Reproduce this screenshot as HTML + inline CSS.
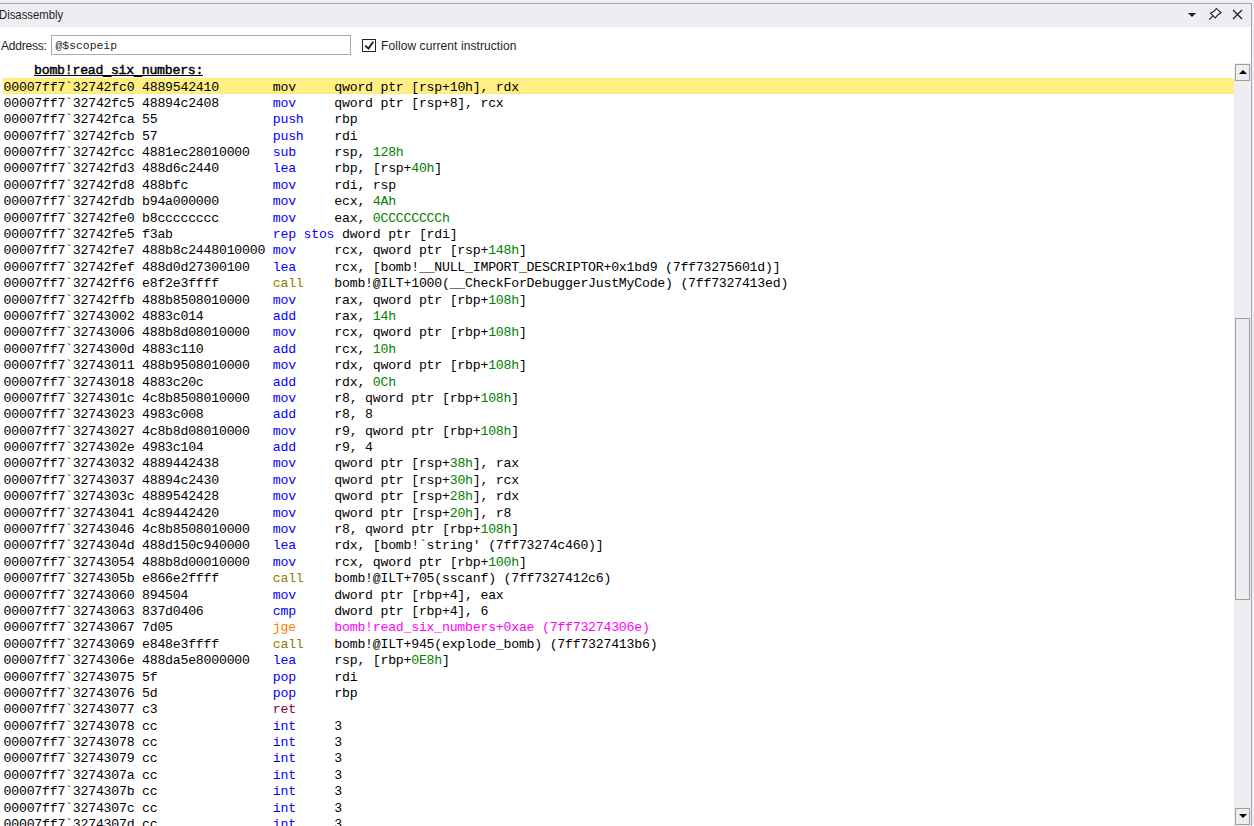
<!DOCTYPE html>
<html><head><meta charset="utf-8">
<style>
html,body{margin:0;padding:0;}
body{width:1254px;height:826px;overflow:hidden;position:relative;background:#eeeef2;font-family:"Liberation Sans",sans-serif;}
.topline{position:absolute;left:0;top:3px;width:1252px;height:1px;background:#a6a6a6;}
.title{position:absolute;left:0;top:4px;width:1251px;height:23px;background:#eeeef2;}
.title .t{position:absolute;left:-1.5px;top:3px;font-size:12.8px;transform:scaleX(0.885);transform-origin:0 0;color:#1e1e1e;line-height:16px;white-space:nowrap;}
.rborder{position:absolute;left:1251px;top:3px;width:1px;height:823px;background:#a6a6a6;}
.content{position:absolute;left:0;top:27px;width:1251px;height:799px;background:#fff;}
.lbl{position:absolute;font-size:12px;color:#1e1e1e;white-space:nowrap;line-height:14px;}
.tb{position:absolute;left:51px;top:35px;width:298px;height:18px;border:1px solid #a9abb3;background:#fff;}
.tb span{position:absolute;left:3.5px;top:2px;font-family:"Liberation Mono",monospace;font-size:11.4px;color:#1e1e1e;line-height:16px;}
.cb{position:absolute;left:362px;top:39px;width:12px;height:11px;border:1px solid #222;background:#fff;}
.code{position:absolute;left:0;top:0;width:1234px;height:826px;overflow:hidden;}
.row{position:absolute;left:3.6px;height:16.406px;width:1231px;white-space:pre;font-family:"Liberation Mono",monospace;font-size:13.2px;letter-spacing:-0.223px;line-height:16.406px;color:#000;}
.hl span{color:#000 !important}
.b{color:#0000ff}.c{color:#868000}.j{color:#ff8000}.r{color:#8a0030}.g{color:#008000}.mg{color:#ff00ff}
.fn{position:absolute;left:34px;top:63px;font-family:"Liberation Mono",monospace;font-weight:normal;-webkit-text-stroke:0.45px #000;font-size:13.2px;letter-spacing:-0.223px;line-height:16.406px;white-space:pre;color:#000;}
.us{position:relative;top:1px}
.sb{position:absolute;left:1234px;top:63px;width:17px;height:763px;background:#ededf2;}
.sbtn{position:absolute;left:1235px;width:13px;height:15px;border:1px solid #a39e93;background:#ededf2;}
.thumb{position:absolute;left:1235px;top:318px;width:13px;height:280px;border:1px solid #a39e93;background:#ededf2;}
</style></head><body>
<div class="topline"></div>
<div class="title"><span class="t">Disassembly</span>
<svg style="position:absolute;left:1186px;top:9px" width="12" height="10"><path d="M2 0 L10 0 L6 4 Z" fill="#1e1e1e"/></svg>
<svg style="position:absolute;left:1204px;top:0px" width="22" height="20"><path d="M5.2 15.6 L8.7 12.1" stroke="#2a2020" stroke-width="1.2" fill="none"/><path d="M12.4 4.6 L17 8.6 L13.6 11 L11.4 14 L6.5 9.2 L9.8 7.6 Z" stroke="#1a1a30" stroke-width="1.15" fill="#f8f8fc"/></svg>
<svg style="position:absolute;left:1231px;top:4px" width="14" height="16"><path d="M2 2 L11 11 M11 2 L2 11" stroke="#1e1e1e" stroke-width="1.3"/></svg>
</div>
<div class="rborder"></div>
<div class="content">
</div>
<div class="lbl" style="left:1px;top:39px;letter-spacing:-0.2px">Address:</div>
<div class="tb"><span>@$scopeip</span></div>
<div class="cb"><svg width="12" height="12" style="position:absolute;left:0;top:0"><path d="M2.2 5.6 L5.5 8.6 L10.2 1.8" fill="none" stroke="#1e1e1e" stroke-width="1.9"/></svg></div>
<div class="lbl" style="left:381px;top:39px;letter-spacing:0.08px">Follow current instruction</div>
<div class="code">
<div style="position:absolute;left:3px;top:78px;width:1231px;height:16px;background:#ffef84;border-top:1px solid #ffec78;border-bottom:1px solid #ffec78;box-sizing:border-box"></div>
<div class="fn">bomb!read<span class="us">_</span>six<span class="us">_</span>numbers:</div><div style="position:absolute;left:34px;top:75px;width:169px;height:1px;background:#000"></div>
<div class="row hl" style="top:80px"><span>00007ff7`32742fc0 4889542410       </span><span class="b">mov     </span>qword ptr [rsp+<span class="g">10h</span>], rdx</div>
<div class="row" style="top:96px"><span>00007ff7`32742fc5 48894c2408       </span><span class="b">mov     </span>qword ptr [rsp+8], rcx</div>
<div class="row" style="top:112px"><span>00007ff7`32742fca 55               </span><span class="b">push    </span>rbp</div>
<div class="row" style="top:129px"><span>00007ff7`32742fcb 57               </span><span class="b">push    </span>rdi</div>
<div class="row" style="top:145px"><span>00007ff7`32742fcc 4881ec28010000   </span><span class="b">sub     </span>rsp, <span class="g">128h</span></div>
<div class="row" style="top:161px"><span>00007ff7`32742fd3 488d6c2440       </span><span class="b">lea     </span>rbp, [rsp+<span class="g">40h</span>]</div>
<div class="row" style="top:178px"><span>00007ff7`32742fd8 488bfc           </span><span class="b">mov     </span>rdi, rsp</div>
<div class="row" style="top:194px"><span>00007ff7`32742fdb b94a000000       </span><span class="b">mov     </span>ecx, <span class="g">4Ah</span></div>
<div class="row" style="top:211px"><span>00007ff7`32742fe0 b8cccccccc       </span><span class="b">mov     </span>eax, <span class="g">0CCCCCCCCh</span></div>
<div class="row" style="top:227px"><span>00007ff7`32742fe5 f3ab             </span><span class="b">rep stos </span>dword ptr [rdi]</div>
<div class="row" style="top:243px"><span>00007ff7`32742fe7 488b8c2448010000 </span><span class="b">mov     </span>rcx, qword ptr [rsp+<span class="g">148h</span>]</div>
<div class="row" style="top:260px"><span>00007ff7`32742fef 488d0d27300100   </span><span class="b">lea     </span>rcx, [bomb!__NULL_IMPORT_DESCRIPTOR+0x1bd9 (7ff73275601d)]</div>
<div class="row" style="top:276px"><span>00007ff7`32742ff6 e8f2e3ffff       </span><span class="c">call    </span>bomb!@ILT+1000(__CheckForDebuggerJustMyCode) (7ff7327413ed)</div>
<div class="row" style="top:293px"><span>00007ff7`32742ffb 488b8508010000   </span><span class="b">mov     </span>rax, qword ptr [rbp+<span class="g">108h</span>]</div>
<div class="row" style="top:309px"><span>00007ff7`32743002 4883c014         </span><span class="b">add     </span>rax, <span class="g">14h</span></div>
<div class="row" style="top:325px"><span>00007ff7`32743006 488b8d08010000   </span><span class="b">mov     </span>rcx, qword ptr [rbp+<span class="g">108h</span>]</div>
<div class="row" style="top:342px"><span>00007ff7`3274300d 4883c110         </span><span class="b">add     </span>rcx, <span class="g">10h</span></div>
<div class="row" style="top:358px"><span>00007ff7`32743011 488b9508010000   </span><span class="b">mov     </span>rdx, qword ptr [rbp+<span class="g">108h</span>]</div>
<div class="row" style="top:375px"><span>00007ff7`32743018 4883c20c         </span><span class="b">add     </span>rdx, <span class="g">0Ch</span></div>
<div class="row" style="top:391px"><span>00007ff7`3274301c 4c8b8508010000   </span><span class="b">mov     </span>r8, qword ptr [rbp+<span class="g">108h</span>]</div>
<div class="row" style="top:407px"><span>00007ff7`32743023 4983c008         </span><span class="b">add     </span>r8, 8</div>
<div class="row" style="top:424px"><span>00007ff7`32743027 4c8b8d08010000   </span><span class="b">mov     </span>r9, qword ptr [rbp+<span class="g">108h</span>]</div>
<div class="row" style="top:440px"><span>00007ff7`3274302e 4983c104         </span><span class="b">add     </span>r9, 4</div>
<div class="row" style="top:456px"><span>00007ff7`32743032 4889442438       </span><span class="b">mov     </span>qword ptr [rsp+<span class="g">38h</span>], rax</div>
<div class="row" style="top:473px"><span>00007ff7`32743037 48894c2430       </span><span class="b">mov     </span>qword ptr [rsp+<span class="g">30h</span>], rcx</div>
<div class="row" style="top:489px"><span>00007ff7`3274303c 4889542428       </span><span class="b">mov     </span>qword ptr [rsp+<span class="g">28h</span>], rdx</div>
<div class="row" style="top:506px"><span>00007ff7`32743041 4c89442420       </span><span class="b">mov     </span>qword ptr [rsp+<span class="g">20h</span>], r8</div>
<div class="row" style="top:522px"><span>00007ff7`32743046 4c8b8508010000   </span><span class="b">mov     </span>r8, qword ptr [rbp+<span class="g">108h</span>]</div>
<div class="row" style="top:538px"><span>00007ff7`3274304d 488d150c940000   </span><span class="b">lea     </span>rdx, [bomb!`string&#x27; (7ff73274c460)]</div>
<div class="row" style="top:555px"><span>00007ff7`32743054 488b8d00010000   </span><span class="b">mov     </span>rcx, qword ptr [rbp+<span class="g">100h</span>]</div>
<div class="row" style="top:571px"><span>00007ff7`3274305b e866e2ffff       </span><span class="c">call    </span>bomb!@ILT+705(sscanf) (7ff7327412c6)</div>
<div class="row" style="top:588px"><span>00007ff7`32743060 894504           </span><span class="b">mov     </span>dword ptr [rbp+4], eax</div>
<div class="row" style="top:604px"><span>00007ff7`32743063 837d0406         </span><span class="b">cmp     </span>dword ptr [rbp+4], 6</div>
<div class="row" style="top:620px"><span>00007ff7`32743067 7d05             </span><span class="j">jge     </span><span class="mg">bomb!read_six_numbers+0xae (7ff73274306e)</span></div>
<div class="row" style="top:637px"><span>00007ff7`32743069 e848e3ffff       </span><span class="c">call    </span>bomb!@ILT+945(explode_bomb) (7ff7327413b6)</div>
<div class="row" style="top:653px"><span>00007ff7`3274306e 488da5e8000000   </span><span class="b">lea     </span>rsp, [rbp+<span class="g">0E8h</span>]</div>
<div class="row" style="top:670px"><span>00007ff7`32743075 5f               </span><span class="b">pop     </span>rdi</div>
<div class="row" style="top:686px"><span>00007ff7`32743076 5d               </span><span class="b">pop     </span>rbp</div>
<div class="row" style="top:702px"><span>00007ff7`32743077 c3               </span><span class="r">ret</span></div>
<div class="row" style="top:719px"><span>00007ff7`32743078 cc               </span><span class="b">int     </span>3</div>
<div class="row" style="top:735px"><span>00007ff7`32743078 cc               </span><span class="b">int     </span>3</div>
<div class="row" style="top:751px"><span>00007ff7`32743079 cc               </span><span class="b">int     </span>3</div>
<div class="row" style="top:768px"><span>00007ff7`3274307a cc               </span><span class="b">int     </span>3</div>
<div class="row" style="top:784px"><span>00007ff7`3274307b cc               </span><span class="b">int     </span>3</div>
<div class="row" style="top:801px"><span>00007ff7`3274307c cc               </span><span class="b">int     </span>3</div>
<div class="row" style="top:817px"><span>00007ff7`3274307d cc               </span><span class="b">int     </span>3</div>
</div>
<div class="sb"></div>
<div class="sbtn" style="top:64px"><svg width="13" height="15"><path d="M3 9 L11 9 L7 5 Z" fill="#000"/></svg></div>
<div class="thumb"></div>
<div class="sbtn" style="top:808px"><svg width="13" height="15"><path d="M3 5 L11 5 L7 9 Z" fill="#000"/></svg></div>
</body></html>
